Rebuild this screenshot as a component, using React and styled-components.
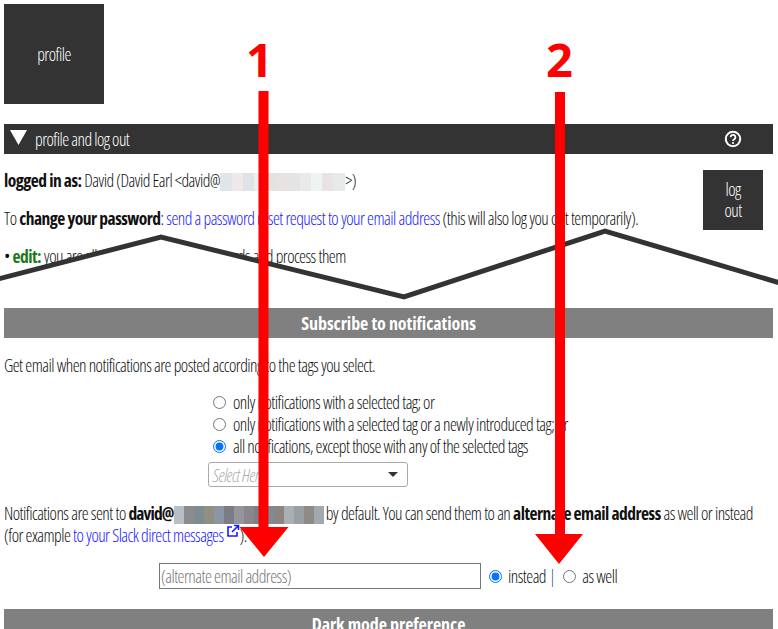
import React from 'react';
import styled, { createGlobalStyle } from 'styled-components';

const Global = createGlobalStyle`
  html, body { margin: 0; padding: 0; background: #fff; height: 629px; overflow: hidden; }
  body { font-family: "Open Sans", "Liberation Sans", sans-serif; font-stretch: 75%; font-weight: 300; font-size: 17.5px; letter-spacing: -0.53px; color: #111; }
`;
const Page = styled.div`position: relative; width: 778px; height: 629px; overflow: hidden; padding: 4px 5px 0 4px; box-sizing: border-box;`;
const ProfileTile = styled.div`width: 100px; height: 100px; background: #333; color: #fff; display: flex; align-items: center; justify-content: center;`;
const DarkBar = styled.div`margin-top: 20px; height: 30px; background: #333; color: #fff; display: flex; align-items: center; padding: 0 31px 0 6px; gap: 8px;`;
const Triangle = styled.svg`width: 17px; height: 15px; flex: none; margin-top: -3px;`;
const Grow = styled.span`flex: 1;`;
const Account = styled.div`position: relative; height: 154px;`;
const LogOut = styled.div`position: absolute; right: 10px; top: 16px; width: 60px; height: 60px; background: #333; color: #fff; text-align: center; padding-top: 9px; box-sizing: border-box; line-height: 21px;`;
const Line = styled.p`margin: 0; height: 22px; line-height: 22px; white-space: nowrap; padding-top: ${p => p.$top}px;`;
const AccountLine = styled(Line)`position: relative; top: -1px;`;
const Strong = styled.b`font-weight: 700; letter-spacing: ${p => p.$tight ? -0.85 : -0.5}px;`;
const Green = styled.b`font-weight: 700; color: #1a7a1a;`;
const Link = styled.a`color: #1a1aff; text-decoration: none;`;
const LinkIcon = styled.svg`vertical-align: 4px; margin-left: 2px;`;
const Pixels = styled.span`display: inline-flex; vertical-align: -4px; height: 18px; margin-right: ${p => p.$gap || 0}px; width: ${p => p.$w}px;`;
const Pixel = styled.span`flex: 1; background: ${p => p.$c};`;
const GreyBar = styled.div`height: 30px; background: #808080; color: #fff; font-weight: 700; font-size: 18px; letter-spacing: -0.07px; display: flex; align-items: center; justify-content: center;`;
const Radios = styled.div`margin: 15px 0 0 204px; display: flex; flex-direction: column;`;
const RadioRow = styled.label`display: flex; align-items: center; height: 22px; gap: 7px; white-space: nowrap; margin-left: ${p => p.$indent || 0}px;`;
const Radio = styled.input.attrs({ type: 'radio' })`margin: 0; width: 13px; height: 13px; flex: none; accent-color: #0075ff;`;
const SelectBox = styled.div`margin: 5px 0 0 0; width: 200px; height: 25px; box-sizing: border-box; border: 1px solid #aaa; border-radius: 3px; display: flex; align-items: center; justify-content: space-between; padding: 0 9px 0 4px; color: #aaa; font-style: italic;`;
const Caret = styled.span`width: 0; height: 0; border: 5px solid transparent; border-top: 5px solid #333; border-bottom: 0;`;
const Notes = styled.div`margin-top: 15px;`;
const AltRow = styled.div`margin: 17px 0 0 155px; display: flex; align-items: center; height: 26px;`;
const AltInput = styled.input`width: 322px; height: 26px; box-sizing: border-box; border: 1px solid #777; padding: 0 1px; font: inherit; font-stretch: 75%; letter-spacing: -0.53px; &::placeholder { color: #777; opacity: 1; }`;
const AltOption = styled.label`display: flex; align-items: center; gap: 6px; margin-left: ${p => p.$ml}px;`;
const Divider = styled.span`color: #1a5a9a; margin-left: 3px;`;
const Overlay = styled.svg`position: absolute; inset: 0; width: 778px; height: 629px; pointer-events: none;`;
const Numeral = styled.div`position: absolute; left: ${p => p.$x}px; top: 31px; font-size: 47px; line-height: 56px; font-weight: 700; font-stretch: 100%; letter-spacing: 0; color: #f00;`;
const Notes2 = styled.div`margin-top: 20px;`;

const mail1 = ['#dfe5e8','#eee8e8','#dde3e6','#eeeeee','#e2e2e2','#e8e2e2','#e4e4e4','#eaeaea','#eff3f3','#e8e4e4','#e6eaea'];
const mail2 = ['#b8bec6','#8c8c8c','#7c8c90','#8f8f84','#8a96a2','#7c7c86','#94969a','#8a868c','#7c8088','#7c8c96','#8c8480','#a8b0b6','#98a0a6','#8e8a88','#a0a8b0'];

export default function App() {
  return (
    <Page>
      <Global />
      <ProfileTile>profile</ProfileTile>
      <DarkBar>
        <Triangle viewBox="0 0 17 15"><polygon points="0,0 17,0 8.500,15" fill="#fff" /></Triangle>
        <span>profile and log out</span>
        <Grow />
        <svg width="18" height="18" viewBox="0 0 18 18" fill="none">
          <circle cx="9" cy="9" r="7.200" stroke="#fff" strokeWidth="2" />
          <path d="M6.600 7.200a2.400 2.400 0 1 1 3.600 2.100c-.8.400-1.200.8-1.200 1.600" stroke="#fff" strokeWidth="1.800" />
          <circle cx="9" cy="13" r="1.100" fill="#fff" />
        </svg>
      </DarkBar>
      <Account>
        <LogOut>log<br />out</LogOut>
        <AccountLine $top={16}><Strong>logged in as:</Strong> David (David Earl &lt;david@<Pixels $w={125}>{mail1.map((c, i) => <Pixel key={i} $c={c} />)}</Pixels>&gt;)</AccountLine>
        <AccountLine $top={16}>To <Strong>change your password</Strong>: <Link>send a password reset request to your email address</Link> (this will also log you out temporarily).</AccountLine>
        <AccountLine $top={16}>• <Green>edit:</Green> you are allowed to add and edit records and process them</AccountLine>
      </Account>
      <GreyBar>Subscribe to notifications</GreyBar>
      <Line $top={16}>Get email when notifications are posted according to the tags you select.</Line>
      <Radios>
        <RadioRow $indent={5}><Radio name="n" />only notifications with a selected tag; or</RadioRow>
        <RadioRow $indent={5}><Radio name="n" />only notifications with a selected tag or a newly introduced tag; or</RadioRow>
        <RadioRow $indent={5}><Radio name="n" defaultChecked />all notifications, except those with any of the selected tags</RadioRow>
        <SelectBox>Select Here<Caret /></SelectBox>
      </Radios>
      <Notes>
        <Line>Notifications are sent to <Strong $tight>david@</Strong><Pixels $w={150} $gap={2}>{mail2.map((c, i) => <Pixel key={i} $c={c} />)}</Pixels>by default. You can send them to an <Strong>alternate email address</Strong> as well or instead</Line>
        <Line>(for example <Link>to your Slack direct messages<LinkIcon width="14" height="14" viewBox="0 0 14 14" fill="none" stroke="#1a1aff" strokeWidth="1.600"><path d="M6 3H2v9h9V8M8 1.500h4.500V6M12 2 6 8" /></LinkIcon></Link>).</Line>
      </Notes>
      <AltRow>
        <AltInput placeholder="(alternate email address)" />
        <AltOption $ml={8}><Radio name="a" defaultChecked />instead</AltOption>
        <Divider>|</Divider>
        <AltOption $ml={8}><Radio name="a" />as well</AltOption>
      </AltRow>
      <Notes2><GreyBar>Dark mode preference</GreyBar></Notes2>

      <Overlay viewBox="0 0 778 629">
        <polygon points="0,279 161,237 404,297 605,231 778,283 778,300 0,300" fill="#fff" />
        <polyline points="-2,279 161,237 404,297 605,231 780,283" fill="none" stroke="#333" strokeWidth="5" />
        <path d="M258.500 91h10v436h20l-24.500 30-24.500-30h19z" fill="#f00" />
        <path d="M555 92h10v442h18l-24 30-24-30h20z" fill="#f00" />
      </Overlay>
      <Numeral $x={246}>1</Numeral>
      <Numeral $x={546}>2</Numeral>
    </Page>
  );
}
